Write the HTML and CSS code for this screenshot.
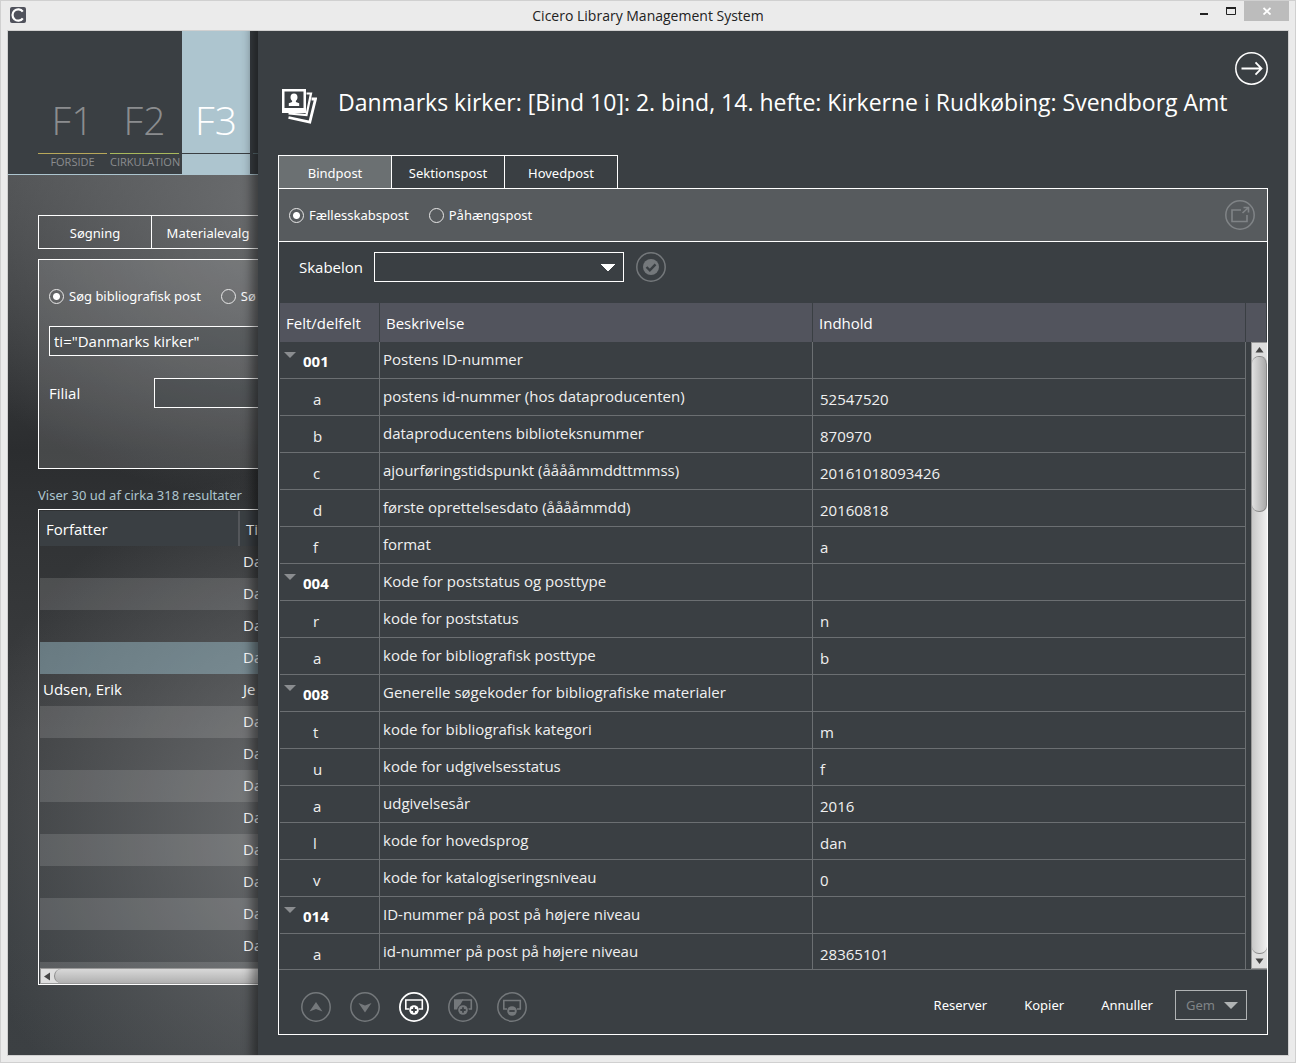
FILE: index.html
```html
<!DOCTYPE html>
<html lang="da">
<head>
    <meta charset="UTF-8">
    <meta name="viewport" content="width=device-width, initial-scale=1.0">
    <title>Cicero Library Management System</title>
    <link rel="stylesheet" href="styles.css">
</head>
<body>
    <div class="titlebar">
        <svg class="app-icon" width="16" height="16" viewBox="0 0 16 16">
            <rect width="16" height="16" rx="2" fill="#50525c"/>
            <path d="M12.8 4.6A5.7 5.7 0 1 0 12.8 11.4" fill="none" stroke="#fff" stroke-width="2.2"/>
        </svg>
        <div class="window-title">Cicero Library Management System</div>
        <div class="window-buttons">
            <button class="win-btn" aria-label="Minimer"><svg width="10" height="10" viewBox="0 0 10 10"><path d="M1 8h8" stroke="#222" stroke-width="2"/></svg></button>
            <button class="win-btn" aria-label="Maksimer"><svg width="10" height="10" viewBox="0 0 10 10"><path d="M.5 1v7.500h9V1" fill="none" stroke="#222"/><path d="M0 2h10" stroke="#222" stroke-width="2"/></svg></button>
            <button class="win-btn win-close" aria-label="Luk"><svg width="8" height="8" viewBox="0 0 8 8"><path d="M.5 1l7 6.500M7.500 1l-7 6.500" stroke="#fff" stroke-width="1.800"/></svg></button>
        </div>
    </div>

    <div class="app">
        <!-- Search page behind the record panel -->
        <div class="page">
            <nav class="nav">
                <a class="nav-item forside" href="#"><span class="key">F1</span><span class="name">FORSIDE</span></a>
                <a class="nav-item cirkulation" href="#"><span class="key">F2</span><span class="name">CIRKULATION</span></a>
                <a class="nav-item active" href="#"><span class="key">F3</span><span class="name"></span></a>
                <a class="nav-item next" href="#"><span class="key"></span><span class="name"></span></a>
            </nav>
            <div class="page-content">
                <div class="page-tabs">
                    <button class="page-tab">Søgning</button>
                    <button class="page-tab">Materialevalg</button>
                </div>
                <form class="search">
                    <div class="radios">
                        <label><input type="radio" name="search" checked>Søg bibliografisk post</label>
                        <label><input type="radio" name="search">Sø</label>
                    </div>
                    <input class="query" type="text" aria-label="Søgning" value='ti="Danmarks kirker"'>
                    <div class="branch">
                        <label for="branch">Filial</label>
                        <input id="branch" type="text">
                    </div>
                </form>
                <div class="hits">Viser 30 ud af cirka 318 resultater</div>
                <div class="results">
                    <div class="results-clip">
                        <table>
                            <thead>
                                <tr><th class="author">Forfatter</th><th>Ti</th></tr>
                            </thead>
                            <tbody>
                                <tr><td></td><td>Da</td></tr>
                                <tr><td></td><td>Da</td></tr>
                                <tr><td></td><td>Da</td></tr>
                                <tr class="selected"><td></td><td>Da</td></tr>
                                <tr><td>Udsen, Erik</td><td>Je</td></tr>
                                <tr><td></td><td>Da</td></tr>
                                <tr><td></td><td>Da</td></tr>
                                <tr><td></td><td>Da</td></tr>
                                <tr><td></td><td>Da</td></tr>
                                <tr><td></td><td>Da</td></tr>
                                <tr><td></td><td>Da</td></tr>
                                <tr><td></td><td>Da</td></tr>
                                <tr><td></td><td>Da</td></tr>
                                <tr><td></td><td></td></tr>
                            </tbody>
                        </table>
                    </div>
                    <div class="hscroll">
                        <svg width="13" height="15" viewBox="0 0 13 15"><path d="M9 3.500v8L3 7.500z" fill="#444"/></svg>
                        <div class="thumb"></div>
                    </div>
                </div>
            </div>
        </div>

        <!-- Record panel -->
        <div class="panel">
            <header class="panel-header">
                <svg class="record-icon" width="35" height="36" viewBox="0 0 35 36">
                    <g fill="none" stroke="#fff">
                        <path d="M24.500 4.500h4.500l-4.500 21.500-18-1.500" stroke-width="2.200"/>
                        <path d="M29.500 10h4L27.800 33 6.500 28.500" stroke-width="2.800"/>
                    </g>
                    <path d="M0 0h24v24H0z" fill="#fff"/>
                    <path d="M2.500 2.500h19v16.500h-19z" fill="#3a3f43"/>
                    <path d="M12 4.500c2.300 0 3.500 1.500 3.500 3.700 0 1.800-.8 2.900-1.600 3.600v1.200l3.300 1.300V17H6.800v-2.700l3.300-1.300v-1.200c-.8-.7-1.600-1.800-1.600-3.600C8.500 6 9.700 4.500 12 4.500z" fill="#fff"/>
                </svg>
                <h1>Danmarks kirker: [Bind 10]: 2. bind, 14. hefte: Kirkerne i Rudkøbing: Svendborg Amt</h1>
                <button class="icon-btn" aria-label="Luk panel">
                    <svg width="33" height="33" viewBox="0 0 33 33" fill="none" stroke="#fff">
                        <circle cx="16.500" cy="16.500" r="15.700" stroke-width="1.500"/>
                        <path d="M6.500 16.500h19.500M20.500 10.300l6 6.200-6 6.200" stroke-width="1.800"/>
                    </svg>
                </button>
            </header>

            <div class="tabs">
                <button class="tab active">Bindpost</button>
                <button class="tab">Sektionspost</button>
                <button class="tab">Hovedpost</button>
            </div>

            <div class="record">
                <div class="toolbar">
                    <div class="radios">
                        <label><input type="radio" name="post" checked>Fællesskabspost</label>
                        <label><input type="radio" name="post">Påhængspost</label>
                    </div>
                    <button class="icon-btn" aria-label="Åbn i nyt vindue" disabled>
                        <svg width="30" height="30" viewBox="0 0 30 30" fill="none" stroke="#808487">
                            <circle cx="15" cy="15" r="14.200" stroke-width="1.500"/>
                            <path d="M16 10H7v11.500h15V15" stroke-width="1.600"/>
                            <path d="M17.500 13l6-5.500M18.500 7.500h5v5" stroke-width="1.600"/>
                        </svg>
                    </button>
                </div>

                <div class="template">
                    <label for="template">Skabelon</label>
                    <select id="template"><option></option></select>
                    <button class="icon-btn" aria-label="Anvend skabelon" disabled>
                        <svg width="30" height="30" viewBox="0 0 30 30">
                            <circle cx="15" cy="15" r="14.200" fill="none" stroke="#74787b" stroke-width="1.500"/>
                            <circle cx="15" cy="15" r="8" fill="#74787b"/>
                            <path d="M10.500 15l3.300 3.300 5.700-6" fill="none" stroke="#3a3f43" stroke-width="2.400"/>
                        </svg>
                    </button>
                </div>

                <div class="fields">
                    <table>
                        <colgroup><col class="col-code"><col><col><col class="col-scroll"></colgroup>
                        <thead>
                            <tr><th>Felt/delfelt</th><th>Beskrivelse</th><th>Indhold</th><th></th></tr>
                        </thead>
                        <tbody>
                            <tr class="group"><td><button aria-label="Fold 001"></button>001</td><td>Postens ID-nummer</td><td></td><td></td></tr>
                            <tr><td>a</td><td>postens id-nummer (hos dataproducenten)</td><td>52547520</td><td></td></tr>
                            <tr><td>b</td><td>dataproducentens biblioteksnummer</td><td>870970</td><td></td></tr>
                            <tr><td>c</td><td>ajourføringstidspunkt (ååååmmddttmmss)</td><td>20161018093426</td><td></td></tr>
                            <tr><td>d</td><td>første oprettelsesdato (ååååmmdd)</td><td>20160818</td><td></td></tr>
                            <tr><td>f</td><td>format</td><td>a</td><td></td></tr>
                            <tr class="group"><td><button aria-label="Fold 004"></button>004</td><td>Kode for poststatus og posttype</td><td></td><td></td></tr>
                            <tr><td>r</td><td>kode for poststatus</td><td>n</td><td></td></tr>
                            <tr><td>a</td><td>kode for bibliografisk posttype</td><td>b</td><td></td></tr>
                            <tr class="group"><td><button aria-label="Fold 008"></button>008</td><td>Generelle søgekoder for bibliografiske materialer</td><td></td><td></td></tr>
                            <tr><td>t</td><td>kode for bibliografisk kategori</td><td>m</td><td></td></tr>
                            <tr><td>u</td><td>kode for udgivelsesstatus</td><td>f</td><td></td></tr>
                            <tr><td>a</td><td>udgivelsesår</td><td>2016</td><td></td></tr>
                            <tr><td>l</td><td>kode for hovedsprog</td><td>dan</td><td></td></tr>
                            <tr><td>v</td><td>kode for katalogiseringsniveau</td><td>0</td><td></td></tr>
                            <tr class="group"><td><button aria-label="Fold 014"></button>014</td><td>ID-nummer på post på højere niveau</td><td></td><td></td></tr>
                            <tr><td>a</td><td>id-nummer på post på højere niveau</td><td>28365101</td><td></td></tr>
                        </tbody>
                    </table>
                    <div class="vscroll">
                        <svg width="15" height="13" viewBox="0 0 15 13"><path d="M3.500 9.500h8L7.500 4z" fill="#444"/></svg>
                        <div class="track"><div class="thumb"></div></div>
                        <svg width="15" height="14" viewBox="0 0 15 14"><path d="M3.500 4.500h8L7.500 10z" fill="#444"/></svg>
                    </div>
                </div>

                <footer class="actions">
                    <div class="icons">
                        <button class="icon-btn" aria-label="Flyt op" disabled>
                            <svg width="30" height="30" viewBox="0 0 30 30"><circle cx="15" cy="15" r="14.200" fill="none" stroke="#74787b" stroke-width="1.500"/><path d="M15 10l6.500 9.500L15 17l-6.500 2.500z" fill="#74787b"/></svg>
                        </button>
                        <button class="icon-btn" aria-label="Flyt ned" disabled>
                            <svg width="30" height="30" viewBox="0 0 30 30"><circle cx="15" cy="15" r="14.200" fill="none" stroke="#74787b" stroke-width="1.500"/><path d="M15 20.500L8.500 11l6.500 2.500 6.500-2.500z" fill="#74787b"/></svg>
                        </button>
                        <button class="icon-btn" aria-label="Tilføj felt">
                            <svg width="30" height="30" viewBox="0 0 30 30"><circle cx="15" cy="15" r="14.100" fill="none" stroke="#fff" stroke-width="1.800"/><path d="M10 17H6.800V8h16.500v9H20" fill="none" stroke="#fff" stroke-width="1.600"/><circle cx="15" cy="18" r="4.800" fill="#fff"/><path d="M15 15.300v5.400M12.300 18h5.400" stroke="#3a3f43" stroke-width="1.800"/></svg>
                        </button>
                        <button class="icon-btn" aria-label="Tilføj delfelt" disabled>
                            <svg width="30" height="30" viewBox="0 0 30 30"><circle cx="15" cy="15" r="14.200" fill="none" stroke="#74787b" stroke-width="1.500"/><path d="M6 7.200h9.500L9.500 17.500H6z" fill="#74787b"/><path d="M14 8h9.300v9H20" fill="none" stroke="#74787b" stroke-width="1.600"/><circle cx="15" cy="18" r="5.800" fill="#3a3f43"/><circle cx="15" cy="18" r="4.800" fill="#74787b"/><path d="M15 15.300v5.400M12.300 18h5.400" stroke="#3a3f43" stroke-width="1.800"/></svg>
                        </button>
                        <button class="icon-btn" aria-label="Fjern felt" disabled>
                            <svg width="30" height="30" viewBox="0 0 30 30"><circle cx="15" cy="15" r="14.200" fill="none" stroke="#74787b" stroke-width="1.500"/><path d="M10 17H6.800V8.500h16.500V17H20" fill="none" stroke="#74787b" stroke-width="1.600"/><circle cx="15" cy="19" r="4.800" fill="#74787b"/><path d="M12.300 19h5.400" stroke="#3a3f43" stroke-width="1.800"/></svg>
                        </button>
                    </div>
                    <div class="commands">
                        <button class="cmd">Reserver</button>
                        <button class="cmd">Kopier</button>
                        <button class="cmd">Annuller</button>
                        <button class="save" disabled>Gem<svg width="14" height="7" viewBox="0 0 14 7"><path d="M0 0h14L7 7z" fill="#b0b3b4"/></svg></button>
                    </div>
                </footer>
            </div>
        </div>
    </div>
</body>
</html>
```

FILE: styles.css
```css
* {
    box-sizing: border-box;
}
body {
    margin: 0;
    height: 100vh;
    display: flex;
    flex-direction: column;
    padding: 0 7px 7px;
    background: #ebebeb;
    box-shadow: inset 0 0 0 1px #d0d0d0;
    font-family: "Segoe UI", "Open Sans", "Noto Sans", sans-serif;
    font-size: 15px;
    color: #fff;
    overflow: hidden;
}
button, input, select {
    font: inherit;
    color: inherit;
    background: none;
    border: 0;
    border-radius: 0;
    margin: 0;
    padding: 0;
    outline: 0;
}
svg {
    display: block;
    flex: none;
}
table {
    border-collapse: separate;
    border-spacing: 0;
    table-layout: fixed;
    width: 100%;
}
th {
    font-weight: normal;
    text-align: left;
}
.page-tabs, .radios, .hits, .tabs, .actions {
    font-family: "Segoe UI", "Noto Sans", "Open Sans", sans-serif;
    font-size: 13px;
}

/* Window frame */
.titlebar {
    display: grid;
    grid-template-columns: 1fr auto 1fr;
    align-items: center;
    height: 30px;
    flex: none;
    color: #222;
    font-size: 14px;
}
.app-icon {
    margin-left: 3px;
}
.window-buttons {
    display: flex;
    justify-content: flex-end;
    align-self: start;
    padding-top: 1px;
}
.win-btn {
    width: 27px;
    height: 20px;
    display: flex;
    align-items: center;
    justify-content: center;
}
.win-close {
    width: 45px;
    background: #bcbcbc;
}
.app {
    flex: 1;
    min-height: 0;
    display: grid;
    grid-template-columns: 250px minmax(0, 1fr);
    grid-template-rows: minmax(0, 1fr);
    border: 1px solid #d0d0d0;
}

/* Search page */
.page {
    display: flex;
    flex-direction: column;
    overflow: hidden;
    background:
        radial-gradient(ellipse 400px 300px at 280px 170px, rgba(110, 112, 114, .95), rgba(110, 112, 114, 0)),
        radial-gradient(ellipse 380px 370px at 330px 800px, rgba(114, 116, 118, .95), rgba(114, 116, 118, 0)),
        linear-gradient(#4a4c4e 140px, #2b2d2f 420px, #323436 520px, #3c3e40 700px, #3a3e41 900px, #3c4043);
}
.page > * {
    min-width: 400px;
}
.nav {
    display: flex;
    gap: 3px;
    height: 144px;
    padding-left: 30px;
    background: #3a3f43;
    border-bottom: 1px solid #adc5cf;
}
.nav-item {
    width: 69px;
    display: flex;
    flex-direction: column;
    justify-content: flex-end;
    text-align: center;
    text-decoration: none;
    color: #8b8d8f;
}
.key {
    height: 64px;
    font-size: 39px;
    line-height: 60px;
    font-weight: 300;
    border-bottom: 1px solid #5c7076;
}
.name {
    height: 20px;
    font-size: 11px;
    line-height: 16px;
}
.forside .key {
    border-color: #b8a85a;
}
.cirkulation .key {
    border-color: #a9b95c;
}
.nav-item.active {
    width: 68px;
    color: #fff;
    background: #adc5cf;
}
.nav-item.active .key {
    border-color: #3a3f43;
}
.page-content {
    flex: 1;
    min-height: 0;
    display: flex;
    flex-direction: column;
    padding: 40px 0 70px 30px;
}
.page-tabs {
    display: flex;
    height: 34px;
    border: 1px solid #fff;
}
.page-tab {
    width: 113px;
    padding-top: 2px;
    border-right: 1px solid #fff;
}
.search {
    display: flex;
    flex-direction: column;
    height: 210px;
    margin-top: 10px;
    padding: 26px 0 0 10px;
    border: 1px solid #fff;
    background: rgba(255, 255, 255, .13);
}
.radios {
    display: flex;
    gap: 20px;
}
.radios label {
    display: flex;
    align-items: center;
    gap: 5px;
    height: 20px;
}
input[type="radio"] {
    appearance: none;
    width: 15px;
    height: 15px;
    border: 1px solid #e8e8e8;
    border-radius: 50%;
}
input[type="radio"]:checked {
    background: radial-gradient(circle, #fff 3px, transparent 4px);
}
.query, .branch input {
    height: 30px;
    border: 1px solid #fff;
}
.query {
    margin-top: 20px;
    padding: 0 4px;
    background: rgba(40, 48, 52, .25);
}
.branch {
    display: flex;
    align-items: center;
    margin-top: 22px;
}
.branch label {
    width: 105px;
}
.branch input {
    flex: 1;
    background: rgba(40, 48, 52, .25);
}
.hits {
    height: 40px;
    line-height: 52px;
    color: #adc5cf;
}
.results {
    flex: 1;
    min-height: 0;
    display: flex;
    flex-direction: column;
    border: 1px solid #fff;
    padding: 1px 0 0 1px;
}
.results-clip {
    flex: 1;
    min-height: 0;
    overflow: hidden;
}
.results th {
    height: 35px;
    padding: 0 6px;
    background: #3a3f43;
}
.results .author {
    width: 200px;
    border-right: 2px solid #54575b;
}
.results td {
    height: 32px;
    padding: 0 3px 2px;
    white-space: nowrap;
}
.results tbody tr:nth-child(even) {
    background: rgba(255, 255, 255, .13);
}
.results tbody tr.selected {
    background: rgba(160, 198, 210, .45);
}
.hscroll {
    display: flex;
    height: 16px;
    flex: none;
    border: 1px solid #999;
    border-right: 0;
    background: #dedede;
}
.hscroll .thumb {
    flex: 1;
    border: 1px solid #8a8a8a;
    border-width: 0 0 0 1px;
    border-radius: 8px 0 0 8px;
    background: linear-gradient(#d8d8d8, #b0b0b0);
}

/* Record panel */
.panel {
    position: relative;
    display: flex;
    flex-direction: column;
    padding: 21px 20px 20px;
    background: #3a3f43;
    box-shadow: 0 0 10px 6px rgba(0, 0, 0, .45);
    clip-path: inset(0 0 0 -30px);
}
.panel-header {
    display: flex;
    align-items: flex-start;
    height: 103px;
}
.record-icon {
    margin: 37px 0 0 4px;
}
.panel-header h1 {
    flex: 1;
    margin: 33px 0 0 21px;
    font-size: 23px;
    line-height: 34px;
    font-weight: 400;
    white-space: nowrap;
}
.tabs {
    display: flex;
    height: 33px;
}
.tab {
    width: 113px;
    padding-top: 2px;
    border: 1px solid #fff;
    border-width: 1px 0 0 1px;
}
.tab:last-child {
    width: 114px;
    border-right-width: 1px;
}
.tab.active {
    background: #6b7072;
}
.record {
    flex: 1;
    min-height: 0;
    display: flex;
    flex-direction: column;
    border: 1px solid #fff;
}
.toolbar {
    display: flex;
    justify-content: space-between;
    align-items: center;
    height: 53px;
    padding: 0 12px 0 10px;
    background: #575b5e;
    border-bottom: 1px solid #fff;
}
.template {
    display: flex;
    align-items: center;
    height: 61px;
    padding: 0 0 11px 20px;
}
.template select {
    appearance: none;
    width: 250px;
    height: 30px;
    margin: 0 12px 0 11px;
    border: 1px solid #fff;
    background:
        linear-gradient(to bottom right, #fff 50%, transparent 51%) right 8px center / 7px 7px no-repeat,
        linear-gradient(to bottom left, #fff 50%, transparent 51%) right 15px center / 7px 7px no-repeat;
}
.fields {
    position: relative;
    flex: 1;
    min-height: 0;
    margin-left: 1px;
    overflow: hidden;
}
.col-code {
    width: 100px;
}
.col-scroll {
    width: 21px;
}
.fields th {
    height: 39px;
    padding: 0 6px;
    background: #52545d;
    border-right: 1px solid #3a3f43;
}
.fields td {
    height: 37px;
    padding: 3px 7px 0;
    border-right: 1px solid #6b6f72;
    border-bottom: 1px solid #6b6f72;
    color: #f0f0f0;
    line-height: 20px;
}
.fields td:first-child {
    padding: 3px 0 0 33px;
}
.fields td:nth-child(2) {
    padding: 0 3px 2px;
}
.fields td:last-child {
    border: 0;
}
.fields .group td:first-child {
    padding: 4px 0 0 4px;
    line-height: 30px;
    vertical-align: top;
    font-weight: bold;
    color: #fff;
}
.group button {
    width: 12px;
    height: 6px;
    margin: 6px 7px 0 0;
    vertical-align: top;
    background: #8a8d90;
    clip-path: polygon(0 0, 100% 0, 50% 100%);
}
/* Scrollbar lies over the empty last column */
.vscroll {
    position: absolute;
    top: 39px;
    right: 0;
    bottom: 0;
    width: 16px;
    display: flex;
    flex-direction: column;
    border: 1px solid #999;
    border-right: 0;
    background: #dedede;
}
.vscroll .track {
    flex: 1;
    border: 1px solid #8a8a8a;
    border-width: 1px 0;
    border-radius: 7px;
    background: linear-gradient(to right, #c8c8c8, #f0f0f0);
}
.vscroll .thumb {
    height: 26%;
    border: 1px solid #8a8a8a;
    border-width: 0 1px 1px 0;
    border-radius: 7px;
    background: linear-gradient(to right, #e0e0e0, #aaa);
}
.actions {
    display: flex;
    justify-content: space-between;
    align-items: center;
    height: 65px;
    padding: 10px 20px 0 22px;
    border-top: 1px solid #6b6f72;
}
.icons {
    display: flex;
    gap: 19px;
}
.commands {
    display: flex;
    align-items: center;
    gap: 37px;
    margin-top: -4px;
}
.save {
    display: flex;
    align-items: center;
    justify-content: space-between;
    width: 72px;
    height: 30px;
    margin-left: -15px;
    padding: 0 8px 0 10px;
    border: 1px solid #b0b3b4;
    color: #808487;
}
```
